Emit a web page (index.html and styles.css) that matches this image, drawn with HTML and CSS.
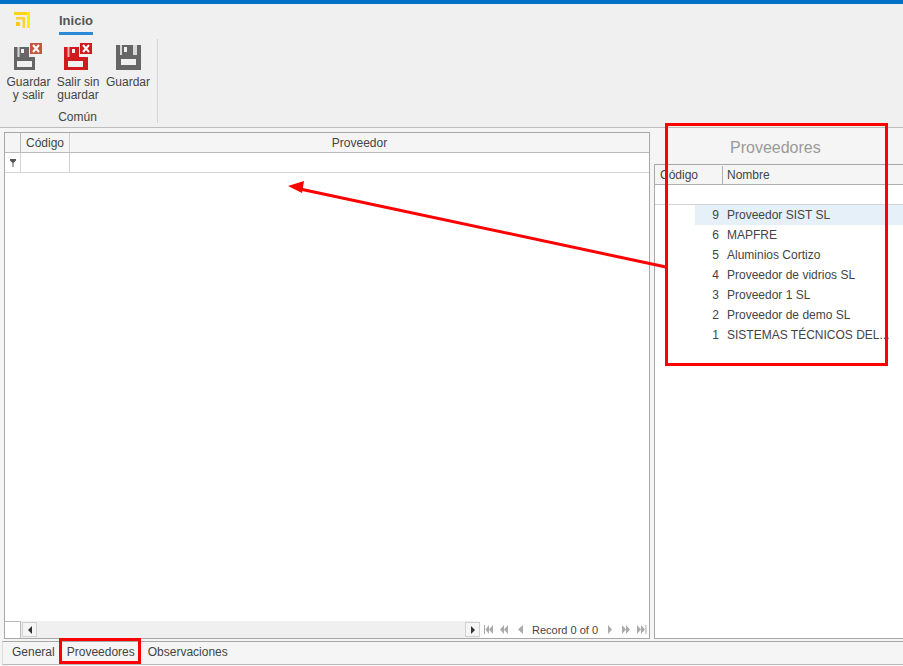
FILE: index.html
```html
<!DOCTYPE html>
<html lang="es">
<head>
  <meta charset="UTF-8">
  <title>Proveedores</title>
  <link rel="stylesheet" href="styles.css">
</head>
<body>
<div class="topbar"></div>

<div class="ribbon">
  <div class="ribbon-tabs">
    <svg class="logo" width="16" height="16" viewBox="0 0 16 16">
      <path d="M0 0h16v3H0z" fill="#ffd21a"/>
      <path d="M13 0h3v16h-3z" fill="#ffee00"/>
      <path d="M2 5h9v11H8.500V7.500H2z" fill="#ffcf33"/>
      <rect x="2" y="10" width="4" height="4" fill="#ffc820"/>
    </svg>
    <span class="ribbon-tab">Inicio</span>
  </div>
  <div class="ribbon-body">
    <div class="group">
      <div class="group-items">
        <div class="cmd cmd-first">
          <svg width="30" height="30" viewBox="0 0 30 30">
            <path d="M1 5H16V15H22V28H1z" fill="#666"/>
            <rect x="4.500" y="5" width="2" height="10" fill="#d8d8d8"/>
            <rect x="8" y="7" width="3" height="4" fill="#f0f0f0"/>
            <rect x="4" y="19" width="15" height="6" fill="#f0f0f0"/>
            <rect x="17" y="1" width="12" height="11" fill="#c8553d"/>
            <path d="M20 3l6 7M26 3l-6 7" stroke="#fff" stroke-width="2"/>
          </svg>
          <span>Guardar<br>y salir</span>
        </div>
        <div class="cmd cmd-second">
          <svg width="30" height="30" viewBox="0 0 30 30">
            <path d="M1 5H16V15H25V28H1z" fill="#d2191e"/>
            <rect x="4.500" y="5" width="2" height="10" fill="#e8b0b0"/>
            <rect x="9" y="7" width="3" height="4" fill="#f0f0f0"/>
            <rect x="5" y="19" width="15" height="6" fill="#f0f0f0"/>
            <rect x="17" y="1" width="12" height="11" fill="#d2191e"/>
            <path d="M20 3l6 7M26 3l-6 7" stroke="#fff" stroke-width="2"/>
          </svg>
          <span>Salir sin<br>guardar</span>
        </div>
        <div class="cmd cmd-third">
          <svg width="27" height="27" viewBox="0 0 27 27">
            <path d="M1 1h25v25H1z" fill="#666"/>
            <rect x="5" y="1" width="2" height="10" fill="#d8d8d8"/>
            <rect x="18" y="1" width="4" height="10" fill="#d8d8d8"/>
            <rect x="9" y="3" width="3" height="5" fill="#f0f0f0"/>
            <rect x="6" y="15" width="15" height="6" fill="#f0f0f0"/>
          </svg>
          <span>Guardar</span>
        </div>
      </div>
      <div class="group-label">Común</div>
    </div>
  </div>
</div>

<div class="main">
  <div class="grid">
    <div class="grid-head">
      <div class="cell cell-ind"></div>
      <div class="cell cell-code">Código</div>
      <div class="cell cell-fill">Proveedor</div>
    </div>
    <div class="grid-filter">
      <div class="cell cell-ind">
        <svg width="6" height="8" viewBox="0 0 6 8"><path d="M0 0h6v1.500L3.500 4v4h-1V4L0 1.500z" fill="#555"/></svg>
      </div>
      <div class="cell cell-code"></div>
      <div class="cell cell-fill"></div>
    </div>
    <div class="grid-body"></div>
    <div class="grid-foot">
      <div class="foot-corner"></div>
      <div class="scroll">
        <div class="scroll-btn"><span class="tri tri-left"></span></div>
        <div class="scroll-track"></div>
        <div class="scroll-btn"><span class="tri tri-right"></span></div>
      </div>
      <div class="pager">
        <svg width="41" height="9" viewBox="0 0 41 9" fill="#aaa">
          <path d="M0 0h1v9H0zM5 0v9L1.500 4.500zM9 0v9L5 4.500z"/>
          <path d="M20 0v9l-4-4.500zM24 0v9l-4-4.500z"/>
          <path d="M39 0v9l-5-4.500z"/>
        </svg>
        <span class="pager-text">Record 0 of 0</span>
        <svg width="49" height="9" viewBox="0 0 49 9" fill="#aaa">
          <path d="M8 0v9l4-4.500z"/>
          <path d="M22 0v9l4-4.500zM26 0v9l4-4.500z"/>
          <path d="M37 0v9l4-4.500zM41 0v9l4-4.500zM45.500 0h1v9h-1z"/>
        </svg>
      </div>
    </div>
  </div>

  <div class="side">
    <div class="side-title">Proveedores</div>
    <div class="side-list">
      <div class="side-head">
        <div class="side-code">Código</div>
        <div class="side-name">Nombre</div>
      </div>
      <div class="side-filter"></div>
      <div class="row row-active"><span class="num">9</span><span class="name">Proveedor SIST SL</span></div>
      <div class="row"><span class="num">6</span><span class="name">MAPFRE</span></div>
      <div class="row"><span class="num">5</span><span class="name">Aluminios Cortizo</span></div>
      <div class="row"><span class="num">4</span><span class="name">Proveedor de vidrios SL</span></div>
      <div class="row"><span class="num">3</span><span class="name">Proveedor 1 SL</span></div>
      <div class="row"><span class="num">2</span><span class="name">Proveedor de demo SL</span></div>
      <div class="row"><span class="num">1</span><span class="name">SISTEMAS TÉCNICOS DEL...</span></div>
    </div>
  </div>
</div>

<div class="tabs">
  <span class="tab tab-general">General</span>
  <span class="tab tab-prov">Proveedores</span>
  <span class="tab tab-obs">Observaciones</span>
</div>

<!-- marcas rojas encima de la captura -->
<div class="mark mark-side"></div>
<div class="mark mark-tab"></div>
<svg class="arrow" width="903" height="666" viewBox="0 0 903 666">
  <path d="M666 267L300 189" stroke="#f00" stroke-width="3" fill="none"/>
  <path d="M288 186l16-5-2 12z" fill="#f00"/>
</svg>
</body>
</html>
```

FILE: styles.css
```css
* {
  box-sizing: border-box;
}

html,
body {
  height: 100%;
}

body {
  display: flex;
  flex-direction: column;
  position: relative;
  width: 903px;
  height: 666px;
  margin: 0;
  overflow: hidden;
  font-family: 'Liberation Sans', Arial, sans-serif;
  font-size: 12px;
  color: #444;
  background: #f5f5f5;
}

.topbar {
  height: 4px;
  background: #0072c6;
}

.ribbon {
  height: 124px;
  background: #f0f0f0;
  border-bottom: 1px solid #bdbdbd;
}

.ribbon-tabs {
  display: flex;
  height: 32px;
  padding: 8px 0 0 14px;
}

.ribbon-tab {
  height: 23px;
  margin-left: 29px;
  padding-top: 1px;
  font-weight: bold;
  font-size: 13px;
  color: #555;
  border-bottom: 3px solid #2b8ad8;
}

.ribbon-body {
  display: flex;
  padding: 3px 0 0 5px;
}

.group {
  width: 153px;
  height: 84px;
  border-right: 1px solid #d4d4d4;
}

.group-items {
  display: flex;
  height: 71px;
}

.cmd {
  display: flex;
  flex-direction: column;
  align-items: center;
  line-height: 13px;
  text-align: center;
}

.cmd svg {
  align-self: flex-start;
  margin-bottom: 4px;
}

.cmd-first {
  width: 47px;
  margin-top: 3px;
}

.cmd-first svg {
  margin-left: 8px;
}

.cmd-second {
  width: 52px;
  margin-top: 3px;
}

.cmd-second svg {
  margin-left: 11px;
}

.cmd-third {
  width: 48px;
  margin-top: 5px;
}

.cmd-third svg {
  margin-left: 11px;
  margin-bottom: 5px;
}

.group-label {
  padding-right: 7px;
  text-align: center;
  line-height: 14px;
}

.main {
  display: flex;
  flex: 1;
  padding: 4px 0 2px 4px;
  min-height: 0;
}

.grid {
  display: flex;
  flex-direction: column;
  width: 646px;
  background: #fff;
  border: 1px solid #a8a8a8;
}

.grid-head,
.grid-filter {
  display: flex;
  height: 20px;
}

.grid-head {
  background: #f5f5f5;
  border-bottom: 1px solid #bbb;
}

.grid-filter {
  background: #fff;
  border-bottom: 1px solid #d4d4d4;
}

.cell {
  display: flex;
  align-items: center;
  justify-content: center;
  border-right: 1px solid #d0d0d0;
}

.cell-ind {
  width: 16px;
  padding-top: 1px;
  background: #f5f5f5;
  border-right: 1px solid #bbb;
}

.grid-filter .cell-ind {
  background: #fff;
  border-right: 1px solid #d4d4d4;
}

.cell-code {
  width: 49px;
}

.cell-fill {
  flex: 1;
  border-right: 0;
}

.grid-body {
  flex: 1;
  background: #fff;
}

.grid-foot {
  display: flex;
  height: 17px;
  background: #f0f0f0;
}

.foot-corner {
  width: 16px;
  background: #fff;
  border-top: 1px solid #bbb;
  border-right: 1px solid #bbb;
}

.scroll {
  display: flex;
  flex: 1;
  padding: 1px 0 1px 1px;
}

.scroll-track {
  flex: 1;
}

.scroll-btn {
  display: flex;
  align-items: center;
  justify-content: center;
  width: 15px;
  background: #f5f5f5;
  border: 1px solid #d0d0d0;
}

.tri {
  width: 0;
  height: 0;
  border-top: 4px solid transparent;
  border-bottom: 4px solid transparent;
}

.tri-left {
  border-right: 4px solid #333;
}

.tri-right {
  border-left: 4px solid #333;
}

.pager {
  display: flex;
  align-items: center;
  width: 169px;
  padding-left: 4px;
  background: #fff;
}

.pager-text {
  margin: 0 2px 0 7px;
  font-size: 11px;
  white-space: nowrap;
  line-height: 16px;
}

.side {
  display: flex;
  flex-direction: column;
  flex: 1;
  margin-left: 4px;
  background: #f5f5f5;
}

.side-title {
  height: 32px;
  padding-top: 7px;
  padding-left: 76px;
  font-size: 16px;
  color: #9a9a9a;
}

.side-list {
  flex: 1;
  background: #fff;
  border: 1px solid #a8a8a8;
  border-right: 0;
}

.side-head {
  display: flex;
  height: 20px;
  padding-top: 1px;
  line-height: 19px;
  background: #f5f5f5;
  border-bottom: 1px solid #b0b0b0;
}

.side-code {
  width: 68px;
  padding-left: 5px;
  border-right: 1px solid #b0b0b0;
}

.side-name {
  padding-left: 4px;
}

.side-filter {
  height: 20px;
  border-bottom: 1px solid #d4d4d4;
}

.row {
  display: flex;
  height: 20px;
  margin-left: 40px;
  line-height: 20px;
  white-space: nowrap;
}

.row-active {
  background: #e5f0f8;
}

.num {
  width: 24px;
  text-align: right;
}

.name {
  margin-left: 8px;
}

.tabs {
  display: flex;
  height: 24px;
  margin: 0 0 1px 2px;
  background: #f5f5f5;
  border-top: 1px solid #a8a8a8;
  border-bottom: 1px solid #bbb;
  border-left: 1px solid #ddd;
  line-height: 20px;
}

.tab-general {
  margin-left: 9px;
}

.tab-prov {
  margin-left: 12px;
}

.tab-obs {
  margin-left: 13px;
}

.mark {
  position: absolute;
  border: 3px solid #f00;
  pointer-events: none;
}

.mark-side {
  left: 665px;
  top: 123px;
  width: 223px;
  height: 243px;
}

.mark-tab {
  left: 59px;
  top: 638px;
  width: 82px;
  height: 26px;
}

.arrow {
  position: absolute;
  left: 0;
  top: 0;
  pointer-events: none;
}
```
